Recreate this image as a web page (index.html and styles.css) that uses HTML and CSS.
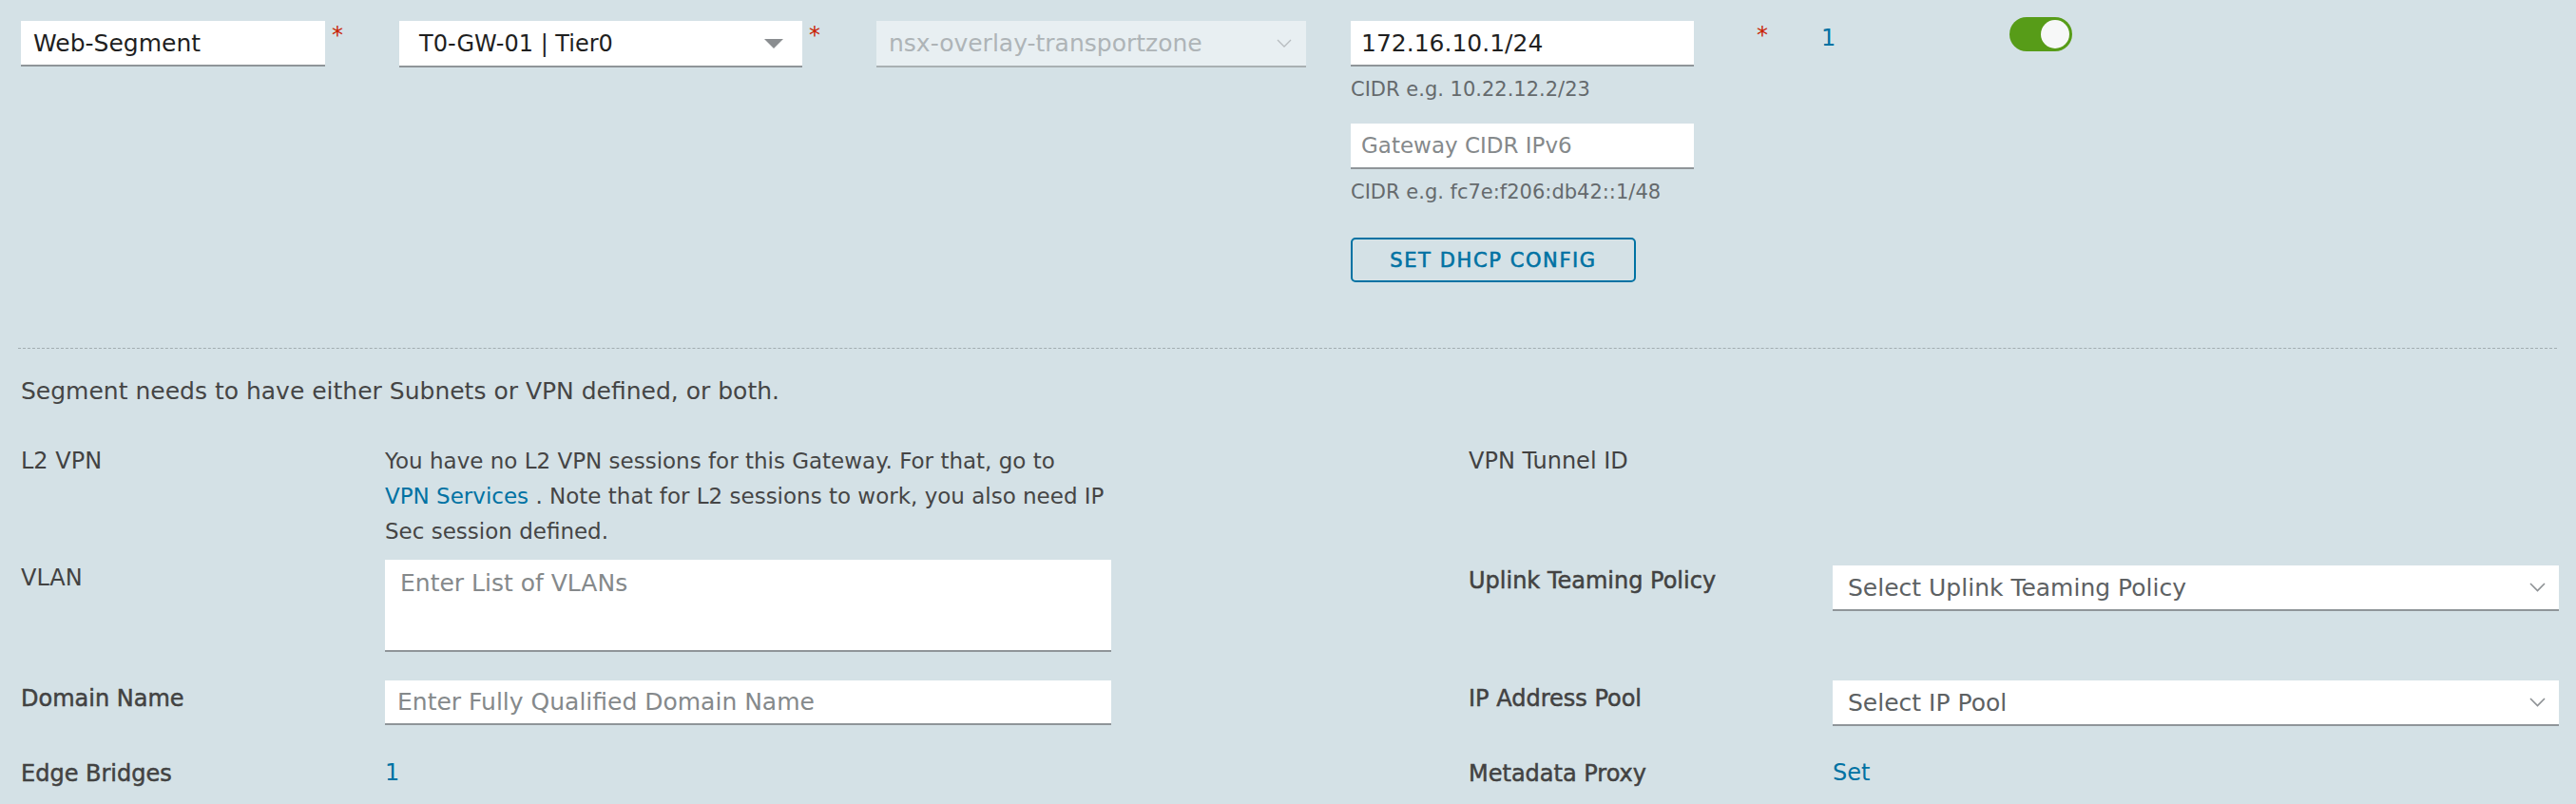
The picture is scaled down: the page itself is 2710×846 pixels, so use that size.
FILE: index.html
```html
<!DOCTYPE html>
<html lang="en">
<head>
<meta charset="utf-8">
<title>Segment</title>
<link rel="stylesheet" href="styles.css">
</head>
<body>
<div class="page">
  <div class="top">
    <div class="field">
      <input class="input w-name" type="text" value="Web-Segment">
      <span class="req">*</span>
    </div>
    <div class="field">
      <div class="select w-gw">
        <span class="sel-value">T0-GW-01 | Tier0</span>
        <svg class="caret" width="20" height="10" viewBox="0 0 20 10"><path d="M0 0H20L10 10Z" fill="#8a8d90"/></svg>
      </div>
      <span class="req">*</span>
    </div>
    <div class="field">
      <div class="select disabled w-tz">
        <span class="sel-value">nsx-overlay-transportzone</span>
        <svg width="16" height="9" viewBox="0 0 16 9"><path d="M1 1L8 8L15 1" stroke="#b7bcbf" stroke-width="1.3" fill="none"/></svg>
      </div>
    </div>
    <div class="subnets">
      <input class="input w-sub" type="text" value="172.16.10.1/24">
      <div class="helper">CIDR e.g. 10.22.12.2/23</div>
      <input class="input w-sub ipv6" type="text" placeholder="Gateway CIDR IPv6">
      <div class="helper">CIDR e.g. fc7e:f206:db42::1/48</div>
      <button class="btn-outline" type="button">Set DHCP Config</button>
    </div>
    <div class="field"><span class="req req-solo">*</span></div>
    <div class="count"><a class="link" href="#">1</a></div>
    <div class="toggle-cell">
      <span class="toggle"><span class="knob"></span></span>
    </div>
  </div>

  <div class="divider"></div>

  <p class="note">Segment needs to have either Subnets or VPN defined, or both.</p>

  <div class="form-grid">
    <div class="label">L2 VPN</div>
    <div class="value l2-text">You have no L2 VPN sessions for this Gateway. For that, go to<br><a class="link" href="#">VPN Services</a> . Note that for L2 sessions to work, you also need IP<br>Sec session defined.</div>
    <div class="label">VPN Tunnel ID</div>
    <div class="value"></div>

    <div class="label">VLAN</div>
    <div class="value"><textarea class="textarea" placeholder="Enter List of VLANs"></textarea></div>
    <div class="label strong shift">Uplink Teaming Policy</div>
    <div class="value">
      <div class="select wide shift-sel">
        <span class="sel-placeholder">Select Uplink Teaming Policy</span>
        <svg width="17" height="10" viewBox="0 0 17 10"><path d="M1 1L8.5 8.5L16 1" stroke="#8d9194" stroke-width="1.6" fill="none"/></svg>
      </div>
    </div>

    <div class="label strong">Domain Name</div>
    <div class="value"><input class="input wide-input" type="text" placeholder="Enter Fully Qualified Domain Name"></div>
    <div class="label strong">IP Address Pool</div>
    <div class="value">
      <div class="select wide">
        <span class="sel-placeholder">Select IP Pool</span>
        <svg width="17" height="10" viewBox="0 0 17 10"><path d="M1 1L8.5 8.5L16 1" stroke="#8d9194" stroke-width="1.6" fill="none"/></svg>
      </div>
    </div>

    <div class="label strong">Edge Bridges</div>
    <div class="value"><a class="link" href="#">1</a></div>
    <div class="label strong">Metadata Proxy</div>
    <div class="value"><a class="link" href="#">Set</a></div>
  </div>
</div>
</body>
</html>
```

FILE: styles.css
```css
* { box-sizing: border-box; }

html, body {
  margin: 0;
  background: #d4e1e6;
}

body {
  font-family: "DejaVu Sans", "Liberation Sans", sans-serif;
  color: #454545;
  font-size: 24px;
}

.page {
  width: 2710px;
  height: 846px;
  overflow: hidden;
  padding: 22px 18px 0 22px;
}

/* ---------- top row ---------- */
.top {
  display: grid;
  grid-template-columns: 398px 502px 499px 427px 68px 198px 1fr;
  align-items: start;
  padding-bottom: 69px;
}

.field {
  display: flex;
  align-items: flex-start;
}

.input {
  display: block;
  height: 48px;
  margin: 0;
  background: #fff;
  border: 0;
  border-bottom: 2px solid #8f9599;
  border-radius: 0;
  outline: none;
  font-family: "DejaVu Sans", sans-serif;
  font-size: 25px;
  color: #1f1f1f;
  padding: 0 13px;
}

.input::placeholder,
.textarea::placeholder {
  color: #85898b;
  opacity: 1;
}

.w-name { width: 320px; }
.w-sub { width: 361px; padding: 0 11px; }
.ipv6 { margin-top: 23px; font-size: 23px; }

.req {
  color: #c92100;
  font-size: 24px;
  line-height: 24px;
  margin-left: 7px;
  margin-top: 3px;
}

.req-solo { margin-left: 0; }

.select {
  display: flex;
  align-items: center;
  justify-content: space-between;
  height: 49px;
  background: #fff;
  border-bottom: 2px solid #8f9599;
  font-size: 25px;
  color: #1f1f1f;
}

.w-gw {
  width: 424px;
  padding: 0 20px 0 21px;
  font-size: 24px;
}

.disabled {
  background: #e8eff2;
  border-bottom-color: #a9b0b3;
  color: #aeb4b7;
}

.w-tz {
  width: 452px;
  padding: 0 15px 0 13px;
}

.subnets {
  display: flex;
  flex-direction: column;
  align-items: flex-start;
}

.helper {
  font-size: 21px;
  line-height: 28px;
  margin-top: 10px;
  margin-bottom: -1px;
  color: #656a6d;
  white-space: nowrap;
}

.btn-outline {
  margin-top: 35px;
  width: 300px;
  height: 47px;
  border: 2px solid #0072a3;
  border-radius: 5px;
  background: transparent;
  color: #0072a3;
  font-family: "DejaVu Sans", sans-serif;
  font-size: 21px;
  letter-spacing: 1.6px;
  text-transform: uppercase;
  -webkit-text-stroke: 0.6px #0072a3;
  padding: 0;
}

.count {
  line-height: 37px;
  font-size: 24px;
}

.link {
  color: #0072a3;
  text-decoration: none;
}

.toggle-cell {
  margin-top: -4px;
}

.toggle {
  display: flex;
  justify-content: flex-end;
  align-items: center;
  width: 66px;
  height: 36px;
  padding: 0 3px;
  border-radius: 18px;
  background: #579c18;
}

.knob {
  width: 30px;
  height: 30px;
  border-radius: 50%;
  background: #f7f8f8;
}

/* ---------- divider ---------- */
.divider {
  margin: 0 2px 0 -3px;
  border-top: 1px dashed #a3adb1;
}

.note {
  margin: 26px 0 36px;
  font-size: 25px;
  line-height: 37px;
  color: #454545;
}

/* ---------- lower form ---------- */
.form-grid {
  display: grid;
  grid-template-columns: 383px 1140px 383px 762px;
  align-items: start;
}

.label {
  line-height: 37px;
  color: #424242;
  white-space: nowrap;
  padding-top: 1px;
}

.strong {
  -webkit-text-stroke: 0.5px #424242;
}

.shift { padding-top: 4px; }

.value {
  line-height: 37px;
}

.l2-text {
  font-size: 23px;
  white-space: nowrap;
  padding-top: 1px;
  padding-bottom: 11px;
  color: #454545;
}

.textarea {
  display: block;
  width: 764px;
  height: 97px;
  margin: 0 0 30px;
  border: 0;
  border-bottom: 2px solid #8f9599;
  border-radius: 0;
  background: #fff;
  padding: 6px 16px 4px;
  font-family: "DejaVu Sans", sans-serif;
  font-size: 25px;
  line-height: 37px;
  resize: none;
  outline: none;
}

.wide-input {
  width: 764px;
  height: 47px;
  font-size: 25px;
  margin-bottom: 32px;
}

.wide {
  width: 764px;
  height: 48px;
  padding: 0 14px 0 16px;
  font-size: 25px;
}

.shift-sel { margin-top: 6px; }

.sel-placeholder {
  color: #5d6163;
}
```
